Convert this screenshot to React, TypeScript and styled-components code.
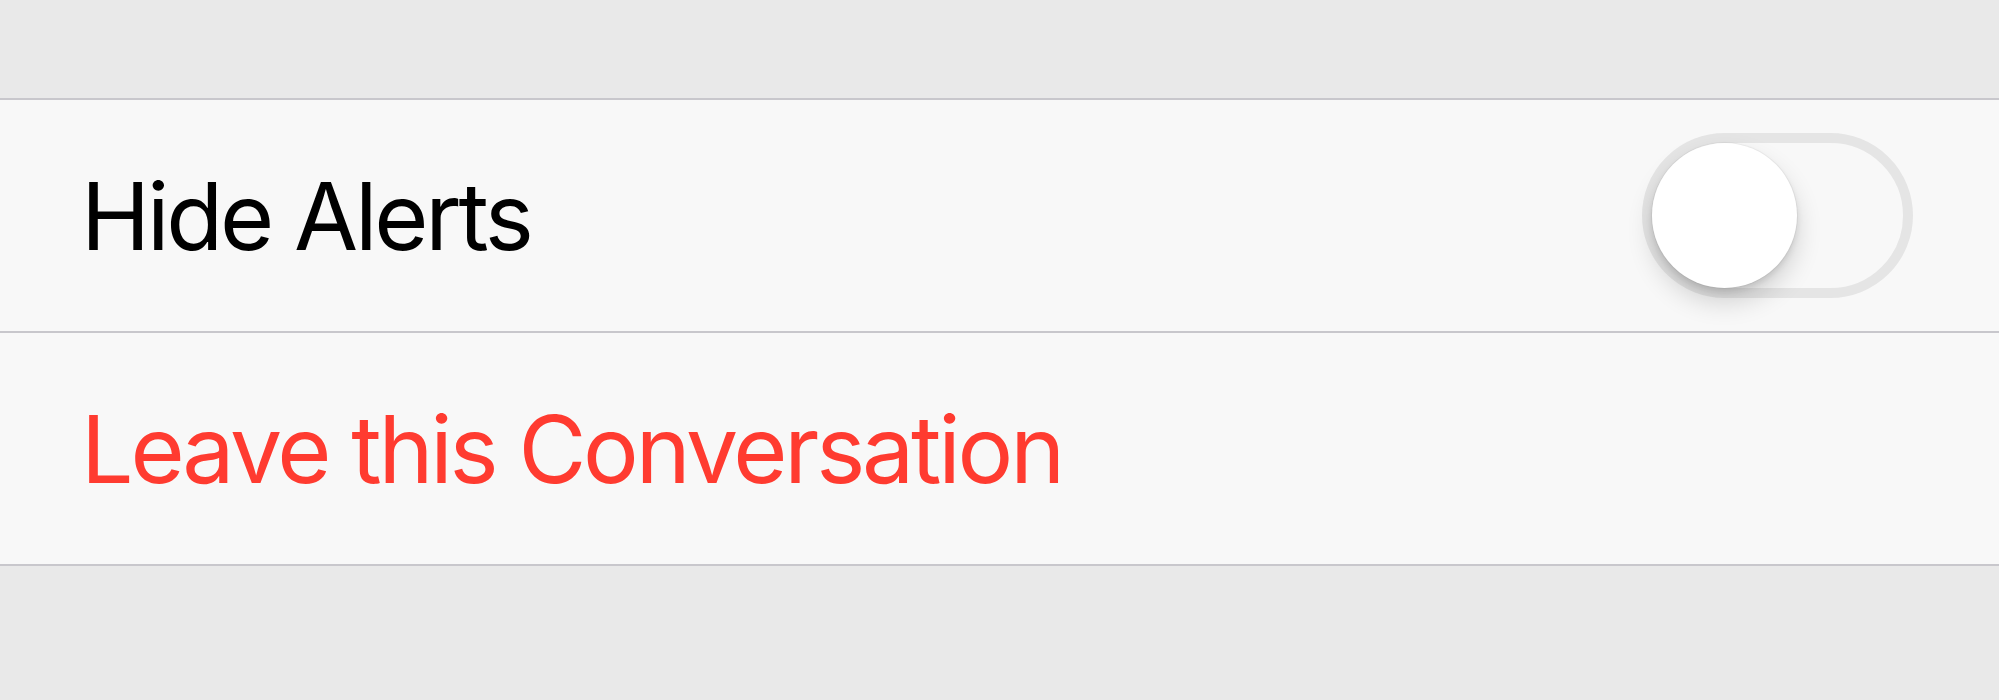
import styled, { createGlobalStyle } from "styled-components";

const GlobalStyle = createGlobalStyle`
  html, body {
    margin: 0;
    padding: 0;
    background: #e9e9e9;
  }
  body {
    font-family: Inter, "Noto Sans", "Liberation Sans", sans-serif;
  }
`;

const Page = styled.div`
  width: 1999px;
  height: 700px;
  padding-top: 98px;
  box-sizing: border-box;
  background: #e9e9e9;
`;

const Group = styled.div`
  background: #f8f8f8;
  border-top: 2px solid #c8c7cc;
  border-bottom: 2px solid #c8c7cc;
`;

const Row = styled.div<{ last?: boolean }>`
  height: 231px;
  display: flex;
  align-items: center;
  justify-content: space-between;
  padding: 0 86px 0 81px;
  border-bottom: ${({ last }) => (last ? "none" : "2px solid #c8c7cc")};
`;

const Label = styled.span<{ danger?: boolean }>`
  font-size: 93px;
  letter-spacing: -3.2px;
  color: ${({ danger }) => (danger ? "#ff3b30" : "#000")};
`;

const Track = styled.div`
  width: 271px;
  height: 165px;
  box-sizing: border-box;
  border: 10px solid #e5e5e5;
  border-radius: 83px;
  background: #f8f8f8;
  display: flex;
  align-items: center;
`;

const Knob = styled.div`
  width: 145px;
  height: 145px;
  border-radius: 50%;
  background: #fff;
  box-shadow: 0 14px 26px rgba(0, 0, 0, 0.16), 0 4px 6px rgba(0, 0, 0, 0.1),
    0 0 0 1px rgba(0, 0, 0, 0.04);
`;

export default function App() {
  return (
    <>
      <GlobalStyle />
      <Page>
        <Group>
          <Row>
            <Label>Hide Alerts</Label>
            <Track>
              <Knob />
            </Track>
          </Row>
          <Row last>
            <Label danger>Leave this Conversation</Label>
          </Row>
        </Group>
      </Page>
    </>
  );
}
